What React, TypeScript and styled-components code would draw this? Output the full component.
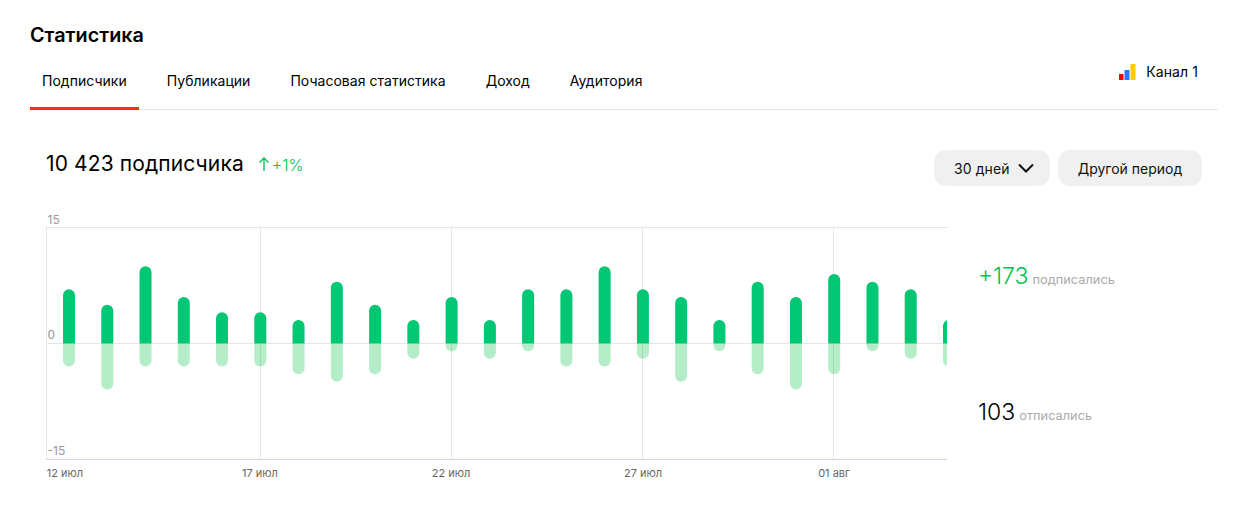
import styled, {createGlobalStyle} from "styled-components";

const GlobalStyle = createGlobalStyle`
  body {
    margin: 0;
    background: #fff;
    font-family: Inter, "Noto Sans", sans-serif;
    color: #000;
  }
`

const Page = styled.div`
  width: 1250px;
  height: 515px;
  box-sizing: border-box;
  padding: 25px 32px 0 30px;
  overflow: hidden;
`

const Title = styled.h1`
  margin: 0 0 1px;
  font-size: 19.8px;
  line-height: 21px;
  font-weight: 600;
`

const TabBar = styled.div`
  display: flex;
  align-items: flex-start;
  justify-content: space-between;
  height: 63px;
  box-sizing: border-box;
  border-bottom: 1px solid #e5e5e5;
`

const Tabs = styled.div`
  display: flex;
  gap: 16px;
  padding-top: 15px;
`

const Tab = styled.div<{ $active?: boolean }>`
  height: 48px;
  box-sizing: border-box;
  padding: 10px 12px 0;
  font-size: 14px;
  line-height: 17px;
  letter-spacing: 0.03px;
  white-space: nowrap;
  border-bottom: 3px solid ${p => (p.$active ? "#ff2c0d" : "transparent")};
`

const Channel = styled.div`
  display: flex;
  align-items: center;
  gap: 10px;
  margin: 15px 20px 0 0;
  font-size: 14px;
  line-height: 20px;
  letter-spacing: 0.1px;
`

const Content = styled.div`
  padding: 40px 16px 0;
`

const SummaryRow = styled.div`
  display: flex;
  justify-content: space-between;
  align-items: flex-start;
  height: 58px;
`

const Summary = styled.div`
  display: flex;
  align-items: center;
  height: 28px;
`

const Total = styled.span`
  font-size: 21px;
  line-height: 28px;
  letter-spacing: 0.12px;
`

const Growth = styled.span`
  display: flex;
  align-items: center;
  gap: 1px;
  margin-left: 13px;
  font-size: 16px;
  font-weight: 300;
  color: #00c04f;
`

const GrowthValue = styled.span`
  padding-top: 2px;
`

const Actions = styled.div`
  display: flex;
  gap: 8px;
`

const PeriodButton = styled.button`
  display: flex;
  align-items: center;
  height: 36px;
  width: 144px;
  justify-content: center;
  padding: 0;
  border: 0;
  border-radius: 12px;
  background: #f0f0f0;
  color: #111;
  font-family: inherit;
  font-size: 14px;
  white-space: nowrap;
`

const DropdownButton = styled(PeriodButton)`
  gap: 8px;
  width: 116px;
  justify-content: flex-start;
  padding: 0 0 0 20px;
  letter-spacing: 0.1px;
`

const ChartRow = styled.div`
  display: flex;
  margin-top: 2px;
`

const Chart = styled.svg`
  display: block;
  flex: none;
  width: 901px;
  height: 270px;
`

const AxisLabel = styled.text`
  font-size: 12px;
  fill: #999;
`

const DateLabel = styled.text`
  font-size: 11px;
  fill: #666;
`

const Totals = styled.div`
  display: flex;
  flex-direction: column;
  gap: 109px;
  padding: 53px 0 0 31px;
`

const TotalRow = styled.div`
  display: flex;
  align-items: baseline;
  gap: 4px;
  height: 27px;
`

const TotalValue = styled.span<{ $green?: boolean }>`
  font-size: 23px;
  line-height: 27px;
  font-weight: 300;
  color: ${p => (p.$green ? "#00c04f" : "#000")};
`

const TotalCaption = styled.span`
  font-size: 12.8px;
  color: #aaa;
`

const ups = [7, 5, 10, 6, 4, 4, 3, 8, 5, 3, 6, 3, 7, 7, 10, 7, 6, 3, 8, 6, 9, 8, 7, 3];
const downs = [3, 6, 3, 3, 3, 3, 4, 5, 4, 2, 1, 2, 1, 3, 3, 2, 5, 1, 4, 6, 4, 1, 2, 3];
const dates = [
    {label: "12 июл", x: 19},
    {label: "17 июл", x: 214},
    {label: "22 июл", x: 405},
    {label: "27 июл", x: 597},
    {label: "01 авг", x: 788},
];
const gridX = [0.5, 214.5, 405.5, 596.5, 787.5];

const ZERO = 133.5;
const UNIT = 7.67;

const barX = (i: number) => 17 + i * 38.26;

const UpBar = ({i, value}: { i: number, value: number }) => {
    const h = value * UNIT + 0.5;
    const x = barX(i);
    return <path fill="#00c774"
                 d={`M${x} ${ZERO}V${ZERO - h + 6}a6 6 0 0 1 12 0V${ZERO}z`}/>;
}

const DownBar = ({i, value}: { i: number, value: number }) => {
    const h = value * UNIT;
    const x = barX(i);
    return <path fill="#00c040" fillOpacity={0.29}
                 d={`M${x} ${ZERO}V${ZERO + h - 6}a6 6 0 0 0 12 0V${ZERO}z`}/>;
}

export default function App() {
    return (
        <Page>
            <GlobalStyle/>
            <Title>Статистика</Title>
            <TabBar>
                <Tabs>
                    <Tab $active>Подписчики</Tab>
                    <Tab>Публикации</Tab>
                    <Tab>Почасовая статистика</Tab>
                    <Tab>Доход</Tab>
                    <Tab>Аудитория</Tab>
                </Tabs>
                <Channel>
                    <svg width="17" height="16" viewBox="0 0 17 16">
                        <rect x="0" y="10" width="4.5" height="6" fill="#ff0000"/>
                        <rect x="5.5" y="6" width="5" height="10" fill="#2f74ff"/>
                        <rect x="11.5" y="0" width="5" height="16" fill="#ffcc00"/>
                    </svg>
                    Канал 1
                </Channel>
            </TabBar>
            <Content>
                <SummaryRow>
                    <Summary>
                        <Total>10 423 подписчика</Total>
                        <Growth>
                            <svg width="14" height="16" viewBox="0 0 14 16" fill="none" stroke="#00c04f"
                                 strokeWidth="1.3">
                                <path d="M7 15V2M2.5 6.5L7 2l4.5 4.5"/>
                            </svg>
                            <GrowthValue>+1%</GrowthValue>
                        </Growth>
                    </Summary>
                    <Actions>
                        <DropdownButton>
                            30 дней
                            <svg width="16" height="10" viewBox="0 0 16 10" fill="none" stroke="#111"
                                 strokeWidth="2">
                                <path d="M1 1.5l7 7 7-7"/>
                            </svg>
                        </DropdownButton>
                        <PeriodButton>Другой период</PeriodButton>
                    </Actions>
                </SummaryRow>
                <ChartRow>
                    <Chart viewBox="0 0 901 270">
                        <path d="M0 17.5H901M0 133.5H901" stroke="#e6e6e6"/>
                        {gridX.map(x => <path key={x} d={`M${x} 17V249`} stroke="#e6e6e6"/>)}
                        <path d="M0 249.5H901" stroke="#ccd6eb"/>
                        {downs.map((v, i) => <DownBar key={i} i={i} value={v}/>)}
                        {ups.map((v, i) => <UpBar key={i} i={i} value={v}/>)}
                        <AxisLabel x="1.5" y="14">15</AxisLabel>
                        <AxisLabel x="1.5" y="129">0</AxisLabel>
                        <AxisLabel x="1.5" y="245">-15</AxisLabel>
                        {dates.map(d => (
                            <DateLabel key={d.label} x={d.x} y="267" textAnchor="middle">{d.label}</DateLabel>
                        ))}
                    </Chart>
                    <Totals>
                        <TotalRow>
                            <TotalValue $green>+173</TotalValue>
                            <TotalCaption>подписались</TotalCaption>
                        </TotalRow>
                        <TotalRow>
                            <TotalValue>103</TotalValue>
                            <TotalCaption>отписались</TotalCaption>
                        </TotalRow>
                    </Totals>
                </ChartRow>
            </Content>
        </Page>
    );
}
